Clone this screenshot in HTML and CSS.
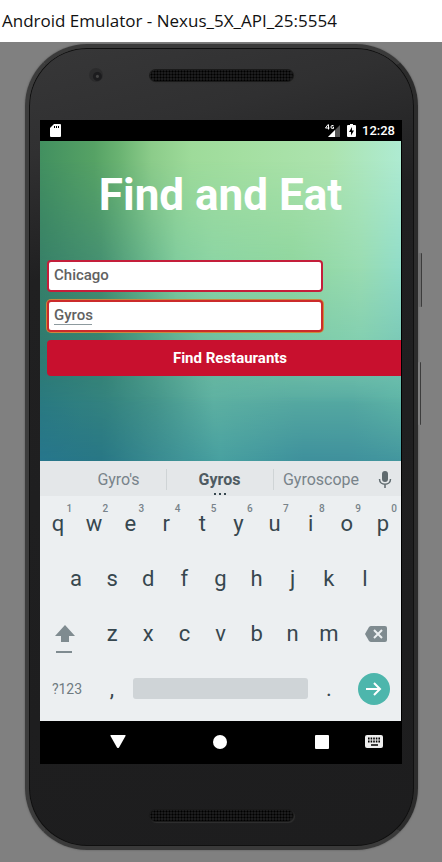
FILE: index.html
```html
<!DOCTYPE html>
<html lang="en">
<head>
<meta charset="utf-8">
<meta name="viewport" content="width=device-width, initial-scale=1">
<title>Android Emulator - Nexus_5X_API_25:5554</title>
<link rel="stylesheet" href="styles.css">
</head>
<body>
<header class="titlebar">Android Emulator - Nexus_5X_API_25:5554</header>
<main class="desk">
  <div class="phone">
    <span class="side power"></span>
    <span class="side volume"></span>
    <div class="bezel top">
      <span class="camera"></span>
      <span class="speaker"></span>
    </div>
    <div class="screen">
      <div class="status">
        <svg width="11" height="14" viewBox="0 0 11 14"><path fill="#fff" d="M4 0h6q1 0 1 1v11q0 1-1 1H1q-1 0-1-1V4z"/><path stroke="#000" d="M4.500 2v2M6.500 2v2M8.500 2v2"/></svg>
        <span class="status-right">
          <svg width="16" height="14" viewBox="0 0 16 14"><path fill="#555" d="M15 1v12H3z"/><path fill="#fff" d="M10 6v7H3z"/><path fill="none" stroke="#fff" d="M3 0.500L.5 4h4M3.500 .5v5M8.500 1.500H7Q6 1.500 6 3t1.200 1.500H8.500V3H7.500"/></svg>
          <svg width="9" height="14" viewBox="0 0 9 14"><path fill="#fff" d="M3 0h3v1h2q1 0 1 1v10q0 1-1 1H1q-1 0-1-1V2q0-1 1-1h2z"/><path fill="#000" d="M5 3L2 8h2v3.500L7 6.500H5z"/></svg>
          <span class="clock">12:28</span>
        </span>
      </div>

      <section class="app">
        <div class="wash w1"></div>
        <div class="wash w2"></div>
        <div class="wash w3"></div>
        <div class="wash w4"></div>
        <div class="wash w5"></div>
        <h1>Find and Eat</h1>
        <form class="search" onsubmit="return false">
          <input type="text" aria-label="City" value="Chicago">
          <input class="active" type="text" aria-label="Food" value="Gyros">
          <button type="submit">Find Restaurants</button>
        </form>
      </section>

      <section class="keyboard">
        <div class="suggest">
          <button>Gyro's</button>
          <button class="best">Gyros<span class="dots"><i></i><i></i><i></i></span></button>
          <button>Gyroscope</button>
          <button aria-label="Voice input"><svg width="14" height="18" viewBox="0 0 14 18"><rect x="4" y="0" width="6" height="11" rx="3" fill="#5f6a6e"/><path d="M1.500 8c0 7 11 7 11 0M7 13v4" fill="none" stroke="#5f6a6e" stroke-width="1.500"/></svg></button>
        </div>
        <div class="row ten">
          <button>q<sup>1</sup></button><button>w<sup>2</sup></button><button>e<sup>3</sup></button><button>r<sup>4</sup></button><button>t<sup>5</sup></button><button>y<sup>6</sup></button><button>u<sup>7</sup></button><button>i<sup>8</sup></button><button>o<sup>9</sup></button><button>p<sup>0</sup></button>
        </div>
        <div class="row nine">
          <button>a</button><button>s</button><button>d</button><button>f</button><button>g</button><button>h</button><button>j</button><button>k</button><button>l</button>
        </div>
        <div class="row seven">
          <button class="shift" aria-label="Shift"><svg width="20" height="28" viewBox="0 0 20 28"><path fill="#7f8b90" d="M10 0l10 11h-6v6H6v-6H0z"/><path fill="#7f8b90" d="M1 26h16v2H1z"/></svg></button>
          <button>z</button><button>x</button><button>c</button><button>v</button><button>b</button><button>n</button><button>m</button>
          <button class="erase" aria-label="Backspace"><svg width="22" height="16" viewBox="0 0 22 16"><path fill="#7f8b90" d="M6 0h14q2 0 2 2v12q0 2-2 2H6q-1 0-2-1L0 8l4-7q1-1 2-1z"/><path d="M9 4l8 8M17 4l-8 8" stroke="#eceff1" stroke-width="2"/></svg></button>
        </div>
        <div class="row last">
          <button class="mode">?123</button>
          <button>,</button>
          <button class="space" aria-label="Space"></button>
          <button>.</button>
          <button aria-label="Next"><span class="go"><svg width="16" height="14" viewBox="0 0 16 14"><path d="M0 7h14M8 1l6 6-6 6" fill="none" stroke="#fff" stroke-width="2"/></svg></span></button>
        </div>
      </section>

      <nav class="nav">
        <button aria-label="Back"><svg width="16" height="14" viewBox="0 0 16 14"><path fill="#fff" d="M1 0h14q1 0 .5 1L9 12.500q-1 1-2 0L.5 1Q0 0 1 0z"/></svg></button>
        <button class="home" aria-label="Home"><svg width="14" height="14" viewBox="0 0 14 14"><circle cx="7" cy="7" r="7" fill="#fff"/></svg></button>
        <button class="overview" aria-label="Overview"><svg width="14" height="14" viewBox="0 0 14 14"><rect width="14" height="14" rx="1" fill="#fff"/></svg></button>
        <button class="ime" aria-label="Switch keyboard"><svg width="18" height="13" viewBox="0 0 18 13"><rect width="18" height="13" rx="2" fill="#eee"/><path d="M3 3.500h13M3 6.500h13" stroke="#000" stroke-width="2" stroke-dasharray="1.600 1"/><path d="M6 10h7" stroke="#000" stroke-width="1.500"/></svg></button>
      </nav>
    </div>
    <div class="bezel bottom"><span class="speaker"></span></div>
  </div>
</main>
</body>
</html>
```

FILE: styles.css
```css
* { box-sizing: border-box; }

body {
  margin: 0;
  min-height: 100vh;
  background: #808080;
  font-family: Roboto, "Liberation Sans", sans-serif;
}

button {
  margin: 0;
  padding: 0;
  border: 0;
  background: none;
  font: inherit;
  color: inherit;
}

svg { display: block; }

.titlebar {
  height: 42px;
  padding-left: 2px;
  background: #fff;
  color: #111;
  font: 17px/42px "Open Sans", "Noto Sans", sans-serif;
  white-space: nowrap;
}

.desk { padding: 2px 24px 12px 25px; }

.phone {
  position: relative;
  padding: 0 12px 0 11px;
  border: 4px solid;
  border-color: #3a3a3a #2c2c2c #3a3a3a #3c3c3c;
  border-radius: 62px;
  background: linear-gradient(165deg, #373738, #303031 12%, #202021 26%, #1d1d1e);
  box-shadow: 0 0 2px #555, inset 0 0 0 1px #101010;
}

.side {
  position: absolute;
  left: 100%;
  margin-left: 4px;
  width: 4px;
  border-right: 1px solid #3c3c3c;
  border-radius: 1px;
  background: #707070;
}
.power { top: 205px; height: 54px; }
.volume { top: 314px; height: 63px; width: 3px; background: #808080; }

.bezel {
  position: relative;
  display: flex;
  justify-content: center;
}
.bezel.top { height: 72px; padding-top: 22px; }
.bezel.bottom { height: 82px; padding-top: 46px; }

.speaker {
  width: 143px;
  height: 11px;
  border-radius: 6px;
  background: radial-gradient(circle, #000 35%, #1c1c1d 60%) 0 0 / 3px 3px;
  box-shadow: 0 0 0 1px #1a1a1a, 1px 1px 1px 1px #303030;
}

.camera {
  position: absolute;
  left: 49px;
  top: 20px;
  width: 14px;
  height: 14px;
  border-radius: 50%;
  background: radial-gradient(circle at 60% 60%, #444 0 1px, #1c1c1e 2px 4px, #2b2b2c 5px);
}

.screen {
  background: #000;
  overflow: hidden;
}

.status {
  display: flex;
  align-items: center;
  justify-content: space-between;
  height: 21px;
  padding: 0 7px 0 10px;
  color: #fff;
}
.status-right { display: flex; align-items: center; gap: 6px; }
.clock { font-size: 13px; font-weight: 500; line-height: 20px; }

.app {
  position: relative;
  height: 320px;
  margin-right: 1px;
  padding-top: 28px;
  overflow: hidden;
}
.wash { position: absolute; inset: 0; }
.w1 { background: linear-gradient(90deg, #429060, #56a265 15%, #6ab372 22%, #8ccc8a 31%, #9edb9a 42%, #a4dfa1 56%, #ace3ae 80%, #aeebd2); }
.w2 {
  background: linear-gradient(90deg, #378068, #459072 17%, #62b088 28%, #80cc9e 38%, #8bd4a4 48%, #8fd69f 70%, #99dcb2 89%, #90dcc8);
  mask-image: linear-gradient(transparent 6%, #000 40%);
}
.w3 {
  background: linear-gradient(90deg, #2f7a70, #36816f 17%, #4e9e86 30%, #6ab89d 44%, #70bfa3 54%, #79c8a8 70%, #80cdb0 89%, #78c6b4);
  mask-image: linear-gradient(transparent 40%, #000 66%);
}
.w4 {
  background: linear-gradient(90deg, #2a7a80, #35847f 19%, #45958b 32%, #5eb1a2 48%, #57aaa1 70%, #56aaa2 87%, #5eb5a6);
  mask-image: linear-gradient(transparent 64%, #000 82%);
}
.w5 {
  background: linear-gradient(90deg, #27768c, #287785 17%, #37888f 30%, #48a0a0 50%, #3e909c 73%, #3f909c 85%, #43969e);
  mask-image: linear-gradient(transparent 80%, #000);
}

h1 {
  position: relative;
  margin: 0 0 39px;
  color: #fff;
  font-size: 44px;
  font-weight: 700;
  line-height: 52px;
  text-align: center;
}

.search {
  position: relative;
  display: flex;
  flex-direction: column;
  align-items: flex-start;
  gap: 8px;
  padding-left: 7px;
}
.search input {
  width: 78%;
  height: 32px;
  padding: 0 5px 2px;
  border: 2px solid #c41e3a;
  border-radius: 4px;
  outline: 0;
  background: #fff;
  color: #616161;
  font: 500 15px/20px Roboto, sans-serif;
}
.search .active {
  border-color: #cc2b2b;
  box-shadow: 0 0 0 1px #c98a3c;
  background: linear-gradient(#8d9a9e, #8d9a9e) 5px 22px / 38px 1px no-repeat #fff;
}
.search button {
  width: calc(100% + 12px);
  height: 36px;
  border-radius: 4px;
  background: #c8102e;
  color: #fff;
  font-size: 15px;
  font-weight: 700;
}

.keyboard {
  margin-right: 1px;
  padding-bottom: 5px;
  background: #eceff1;
  color: #37474f;
}

.suggest {
  display: grid;
  grid-template-columns: 95fr 107fr 96fr 32fr;
  height: 35px;
  padding: 2px 0 0 31px;
  background: #e4e7e9;
  color: #78838a;
  font-size: 16px;
}
.suggest button {
  position: relative;
  display: flex;
  align-items: center;
  justify-content: center;
}
.suggest .best {
  color: #4f5b62;
  font-weight: 700;
}
.best::before, .best::after {
  content: "";
  position: absolute;
  top: 6px;
  bottom: 6px;
  left: 0;
  width: 1px;
  background: #cfd4d6;
}
.best::after { left: 100%; }
.dots {
  position: absolute;
  bottom: 1px;
  display: flex;
  gap: 3px;
}
.dots i { width: 2px; height: 2px; background: #37474f; }

.row {
  display: grid;
  height: 55px;
  font-size: 22px;
}
.row button {
  position: relative;
  display: flex;
  align-items: center;
  justify-content: center;
}
.ten { grid-template-columns: repeat(10, 1fr); }
.nine { grid-template-columns: repeat(9, 1fr); padding: 0 18px; }
.seven { grid-template-columns: 54fr repeat(7, 36fr) 54fr; }
.last { grid-template-columns: 54fr 36fr 181fr 36fr 54fr; }

sup {
  position: absolute;
  top: 6px;
  right: 4px;
  color: #78838a;
  font-size: 10px;
  font-weight: 500;
  line-height: 14px;
}
.row .shift { padding: 10px 4px 0 0; }
.row .erase { padding-left: 4px; }
.row .mode { color: #6f7b81; font-size: 14px; }
.row .space {
  align-self: center;
  height: 21px;
  margin: 0 3px;
  border-radius: 3px;
  background: #cfd4d7;
}
.go {
  display: grid;
  place-items: center;
  width: 32px;
  height: 32px;
  border-radius: 50%;
  background: #4db6ac;
}

.nav {
  display: grid;
  grid-template-columns: 36fr 66fr 36fr 66fr 36fr 16fr 36fr;
  height: 43px;
  padding: 0 10px 2px 60px;
}
.nav button {
  display: grid;
  place-items: center;
}
.nav .home { grid-column: 3; }
.nav .overview { grid-column: 5; }
.nav .ime { grid-column: 7; }
```
